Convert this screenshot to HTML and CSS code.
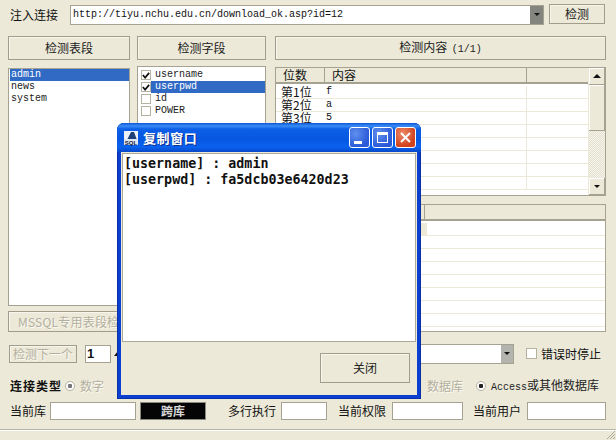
FILE: index.html
```html
<!DOCTYPE html>
<html lang="zh">
<head>
<meta charset="utf-8">
<title>注入连接</title>
<link rel="stylesheet" href="styles.css">
</head>
<body>
<div class="app">
  <div class="url-row">
    <span class="label url-label">注入连接</span>
    <div class="combo url-combo"><span class="mono combo-text">http://tiyu.nchu.edu.cn/download_ok.asp?id=12</span><span class="combo-arrow dark"><i class="tri-down"></i></span></div>
    <button class="btn check-btn">检测</button>
  </div>

  <div class="main">
    <div class="left">
      <div class="left-cols">
        <div class="col tables-col">
          <button class="btn head-btn">检测表段</button>
          <ul class="list mono">
            <li class="sel">admin</li>
            <li>news</li>
            <li>system</li>
          </ul>
        </div>
        <div class="col fields-col">
          <button class="btn head-btn">检测字段</button>
          <ul class="list fields mono">
            <li><i class="cb"><svg viewBox="0 0 9 9" width="9" height="9"><path d="M1 4l2.5 3L8 1.5" fill="none" stroke="#111" stroke-width="2"/></svg></i><span>username</span></li>
            <li><i class="cb"><svg viewBox="0 0 9 9" width="9" height="9"><path d="M1 4l2.5 3L8 1.5" fill="none" stroke="#111" stroke-width="2"/></svg></i><span class="sel">userpwd</span></li>
            <li><i class="cb"></i><span>id</span></li>
            <li><i class="cb"></i><span>POWER</span></li>
          </ul>
        </div>
      </div>
      <button class="btn mssql" disabled><span class="disabled-text">MSSQL专用表段检测</span></button>
    </div>

    <div class="right">
      <button class="btn head-btn">检测内容 <span class="count">(1/1)</span></button>
      <div class="grid-box top-grid">
        <div class="grid-body">
          <div class="grid-head">
            <span class="th th-a">位数</span><span class="th th-b">内容</span><span class="th th-c"></span>
          </div>
          <div class="top-rows">
            <div class="tr"><span class="td-a">第1位</span><span class="td-b mono">f</span></div>
            <div class="tr"><span class="td-a">第2位</span><span class="td-b mono">a</span></div>
            <div class="tr"><span class="td-a">第3位</span><span class="td-b mono">5</span></div>
            <div class="tr"></div><div class="tr"></div><div class="tr"></div><div class="tr"></div><div class="tr"></div>
          </div>
        </div>
        <div class="scrollbar">
          <span class="sb-btn"><i class="tri-up"></i></span>
          <span class="sb-thumb"></span>
          <span class="sb-track"></span>
          <span class="sb-btn"><i class="tri-down"></i></span>
        </div>
      </div>
      <div class="grid-box bottom-grid">
        <div class="grid-head low">
          <span class="th th-l"></span><span class="th th-r"></span>
        </div>
        <div class="low-rows">
          <div class="tr"><span class="grey-cell"></span></div>
          <div class="tr"></div><div class="tr"></div><div class="tr"></div><div class="tr"></div><div class="tr"></div><div class="tr"></div><div class="tr"></div>
        </div>
      </div>
    </div>
  </div>

  <div class="next-row">
    <button class="btn next-btn" disabled><span class="disabled-text">检测下一个</span></button>
    <span class="num-input">1</span>
    <i class="spin-up"></i>
    <span class="combo next-combo"><span class="combo-arrow light"><i class="tri-down"></i></span></span>
    <i class="cb stop-cb"></i>
    <span class="label">错误时停止</span>
  </div>

  <div class="conn-row">
    <b class="conn-title">连接类型</b>
    <i class="radio"></i>
    <span class="disabled-text">数字</span>
    <span class="disabled-text db-text">数据库</span>
    <i class="radio access-radio"></i>
    <span class="label access-text"><span class="mono">Access</span>或其他数据库</span>
  </div>

  <div class="info-row">
    <span class="label">当前库</span>
    <span class="field f-db"></span>
    <span class="cross">跨库</span>
    <span class="label multi">多行执行</span>
    <span class="field f-multi"></span>
    <span class="label perm">当前权限</span>
    <span class="field f-perm"></span>
    <span class="label user">当前用户</span>
    <span class="field f-user"></span>
  </div>

  <div class="status">
    <svg class="grip" viewBox="0 0 11 11" width="11" height="11"><path d="M10 2L2 10M10 5L5 10M10 8L8 10" stroke="#aca899" fill="none"/></svg>
  </div>
</div>

<div class="dialog">
  <div class="title-bar">
    <svg class="app-icon" viewBox="0 0 16 16" width="16" height="16"><rect x="1" y="1" width="14" height="14" fill="#eef3fa"/><path d="M4 10L8 2h3l3 8z" fill="#1f3f78"/><rect x="1" y="9" width="14" height="6" fill="#dfe6ee"/><text x="8" y="14.5" text-anchor="middle" class="icon-text">SQL</text></svg>
    <span class="title-text">复制窗口</span>
    <span class="win-btn"><i class="glyph-min"></i></span>
    <span class="win-btn"><i class="glyph-max"></i></span>
    <span class="win-btn close"><svg viewBox="0 0 11 11" width="11" height="11"><path d="M1 1l9 9M10 1l-9 9" stroke="#fff" stroke-width="2" fill="none"/></svg></span>
  </div>
  <div class="dialog-inner">
    <div class="dialog-text">[username] : admin<br>[userpwd] : fa5dcb03e6420d23</div>
    <div class="dialog-foot"><button class="btn close-btn">关闭</button></div>
  </div>
</div>
</body>
</html>
```
FILE: styles.css
```css
* { box-sizing: border-box; }
html, body { margin: 0; padding: 0; }
body {
  width: 616px; height: 440px; overflow: hidden; position: relative;
  background: #ece9d8; color: #111;
  font: 12px/14px "Noto Sans CJK SC", "Liberation Sans", sans-serif;
}
ul { list-style: none; margin: 0; padding: 0; }
i { display: block; font-style: normal; }
.mono { font-family: "Liberation Mono", "DejaVu Sans Mono", monospace; font-size: 10px; }
.app { height: 440px; display: flex; flex-direction: column; padding: 4px 10px 0 8px; }
.btn {
  display: block; padding: 0; margin: 0; background: #ece9d8; color: #222;
  border: 1px solid #a09d8c; box-shadow: inset 1px 1px 0 #f8f6ec;
  font: 12px/14px "Noto Sans CJK SC", sans-serif;
}
.disabled-text { color: #b3af9e; text-shadow: 1px 1px 0 #fbfaf3; }

.url-row { display: flex; align-items: flex-start; height: 32px; }
.url-label { margin: 4px 12px 0 2px; width: 48px; flex: none; }
.combo { display: flex; background: #fff; border: 1px solid #a5a291; }
.url-combo { width: 474px; height: 20px; margin-top: 1px; align-items: center; padding-left: 2px; }
.combo-text { flex: 1; }
.combo-arrow { display: flex; justify-content: center; padding-top: 7px; width: 13px; align-self: stretch; flex: none; }
.combo-arrow.dark { background: #85857f; }
.combo-arrow.light { background: #b4b4ae; width: 12px; }
.tri-down { width: 0; height: 0; border: 3px solid transparent; border-top: 3px solid #111; border-bottom: 0; }
.tri-up { width: 0; height: 0; border: 4px solid transparent; border-bottom: 4px solid #111; border-top: 0; }
.check-btn { width: 56px; height: 20px; margin-left: 5px; }

.main { display: flex; gap: 9px; height: 296px; }
.left { width: 258px; flex: none; display: flex; flex-direction: column; }
.left-cols { display: flex; gap: 7px; height: 270px; }
.col { display: flex; flex-direction: column; gap: 8px; }
.tables-col { width: 122px; }
.fields-col { width: 129px; gap: 6px; }
.head-btn { height: 24px; width: 100%; flex: none; }
.list { flex: 1; background: #fff; border: 1px solid #a5a291; padding: 0 0 0 1px; line-height: 12px; color: #222; }
.list li { height: 12px; padding-left: 1px; }
.list li.sel { background: #316ac5; color: #fff; }
.fields { padding: 2px 0 0 3px; }
.fields li { display: flex; align-items: center; padding: 0; }
.fields li span { flex: 1; padding-left: 4px; line-height: 12px; height: 12px; }
.fields li span.sel { background: #316ac5; color: #fff; }
.cb { width: 10px; height: 10px; flex: none; background: #fff; border: 1px solid #b5b29f; display: flex; align-items: center; justify-content: center; }
.mssql { width: 258px; height: 21px; margin-top: 5px; text-align: left; padding-left: 9px; }
.mssql .disabled-text { letter-spacing: .2px; }

.right { width: 331px; flex: none; display: flex; flex-direction: column; }
.count { font-family: "Liberation Mono", monospace; font-size: 10px; margin-left: 2px; }
.grid-box { background: #fff; border: 1px solid #a5a291; margin-top: 7px; overflow: hidden; }
.top-grid { height: 129px; display: flex; flex: none; }
.grid-body { flex: 1; min-width: 0; }
.grid-head { display: flex; height: 16px; background: #ece9d8; border-bottom: 2px solid #a5a291; }
.top-rows { margin-top: 2px; }
.th { display: block; border-right: 1px solid #a5a291; padding-left: 7px; line-height: 14px; height: 14px; }
.th-a { width: 49px; }
.th-b { width: 202px; }
.th-c { flex: 1; border-right: 0; }
.tr { display: flex; height: 13px; border-bottom: 1px solid #ece9d8; line-height: 12px; background: linear-gradient(#ece9d8, #ece9d8) 250px 0 / 1px 100% no-repeat; }
.td-a { width: 50px; padding-left: 5px; }
.td-b { padding-left: 0; line-height: 12px; }
.scrollbar { width: 17px; flex: none; display: flex; flex-direction: column; background: #f4f2e8; border-left: 1px solid #ece9d8; }
.sb-btn { height: 17px; flex: none; display: flex; align-items: center; justify-content: center; background: #ece9d8; border: 1px solid #a5a291; border-width: 0 1px 1px 0; box-shadow: inset 1px 1px 0 #fff; }
.sb-thumb { height: 46px; flex: none; background: #ece9d8; border: 1px solid #a5a291; border-width: 0 1px 1px 0; box-shadow: inset 1px 1px 0 #fff; }
.sb-track { flex: 1; background: repeating-conic-gradient(#e2dfcd 0 25%, #f7f6ee 0 50%) 0 0 / 2px 2px; }

.bottom-grid { height: 128px; margin-top: 8px; flex: none; }
.grid-head.low { height: 16px; }
.th-l { width: 149px; }
.th-r { flex: 1; border-right: 0; }
.low-rows { margin-top: 2px; }
.low-rows .tr { background: none; }
.grey-cell { display: block; width: 151px; height: 12px; background: #ece9d8; }

.next-row { display: flex; align-items: center; height: 19px; margin-top: 12px; }
.next-btn { width: 68px; height: 18px; margin-left: 1px; font-size: 12px; }
.num-input { width: 26px; height: 18px; margin-left: 8px; background: #fff; border: 1px solid #a5a291; font: bold 13px/15px "Liberation Sans", sans-serif; padding-left: 1px; }
.spin-up { width: 0; height: 0; border: 4px solid transparent; border-bottom: 5px solid #111; border-top: 0; margin-left: 3px; flex: none; }
.next-combo { width: 392px; height: 20px; margin-left: 0; justify-content: flex-end; }
.stop-cb { margin: 0 4px 0 12px; width: 11px; height: 11px; }

.conn-row { display: flex; align-items: center; height: 16px; margin-top: 15px; }
.conn-title { margin-left: 2px; width: 52px; font-weight: 700; letter-spacing: 1px; }
.radio { width: 10px; height: 10px; margin: 0 5px 0 3px; border-radius: 50%; background: radial-gradient(circle, #777 0 2px, #fff 2.5px 100%); border: 1px solid #b5b29f; flex: none; }
.db-text { margin-left: 323px; }
.access-radio { margin: 0 5px 0 13px; background: radial-gradient(circle, #222 0 2px, #fff 2.5px 100%); }
.access-text { color: #222; }

.info-row { display: flex; align-items: center; height: 18px; margin-top: 8px; }
.label { flex: none; }
.info-row .label:first-child { margin-left: 2px; }
.field { display: block; background: #fff; border: 1px solid #a5a291; height: 18px; flex: none; }
.f-db { width: 86px; margin-left: 4px; }
.cross { width: 66px; height: 18px; margin-left: 4px; background: #050505; color: #d8d8d8; text-align: center; line-height: 16px; font-weight: 700; flex: none; border: 1px solid #8a8a80; }
.multi { margin-left: 22px; }
.f-multi { width: 46px; margin-left: 5px; }
.perm { margin-left: 11px; }
.f-perm { width: 71px; margin-left: 6px; }
.user { margin-left: 10px; }
.f-user { width: 79px; margin-left: 6px; }

.status { position: absolute; left: 0; right: 0; top: 429px; height: 11px; border-top: 1px solid #b9b6a6; box-shadow: inset 0 1px 0 #fff; }
.grip { position: absolute; right: 0; bottom: 0; }

.dialog { position: absolute; left: 117px; top: 123px; width: 304px; height: 276px; background: #0a3fd0; border-radius: 7px 7px 0 0; padding: 0 4px 4px; display: flex; flex-direction: column; box-shadow: inset 1px 0 0 #0831a8, inset -1px 0 0 #0831a8, inset 0 -1px 0 #0831a8; }
.title-bar { height: 29px; flex: none; margin: 0 -4px; padding: 0 5px 0 6px; display: flex; align-items: center; color: #fff; border-radius: 7px 7px 0 0; background: linear-gradient(#0a56d8 0, #3a8cf5 3px, #0c5fe6 6px, #0757e2 16px, #0a62ef 24px, #0748c8 29px); }
.app-icon { flex: none; margin-right: 4px; }
.icon-text { font: 700 6px "Liberation Sans", sans-serif; fill: #10203c; }
.title-text { flex: 1; font-weight: 700; font-size: 13px; letter-spacing: .6px; text-shadow: 1px 1px 0 #0a2f90; }
.win-btn { width: 21px; height: 21px; margin-left: 2px; border: 1px solid #fff; border-radius: 3px; background: radial-gradient(circle at 30% 30%, #5f90ee, #2a5ad8 70%); display: flex; align-items: center; justify-content: center; flex: none; position: relative; }
.glyph-min { width: 8px; height: 3px; background: #fff; margin-top: 9px; margin-right: 3px; }
.glyph-max { width: 11px; height: 11px; border: 1px solid #fff; border-top-width: 3px; }
.win-btn.close { background: radial-gradient(circle at 35% 30%, #ee8a6a, #d0421c 70%); }
.dialog-inner { flex: 1; min-height: 0; background: #ece9d8; display: flex; flex-direction: column; padding: 1px 0 0 0; }
.dialog-text { height: 189px; flex: none; margin: 0 1px; background: #fff; border: 1px solid #aca899; padding: 2px 0 2px 1px; font: 700 13.33px/16px "DejaVu Sans Mono", monospace; color: #111; white-space: nowrap; }
.dialog-foot { flex: 1; display: flex; justify-content: flex-end; align-items: flex-start; padding: 11px 7px 0 0; }
.close-btn { width: 90px; height: 30px; }
```
